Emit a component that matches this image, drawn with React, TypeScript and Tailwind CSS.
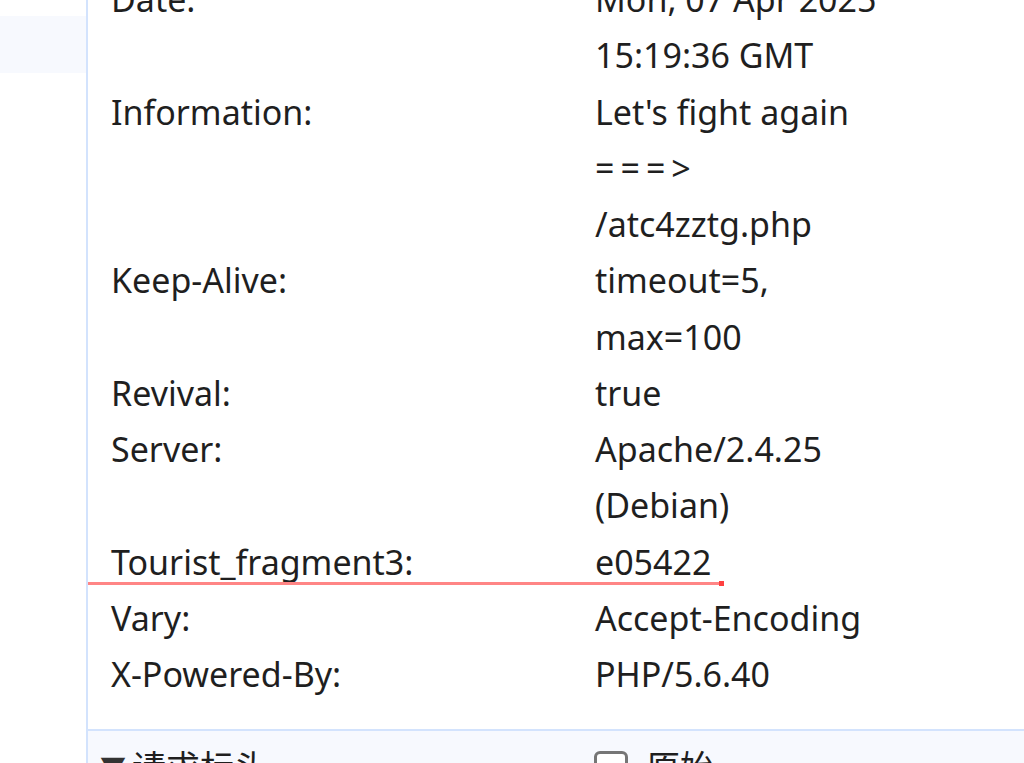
const rows: { key: string; value: string[] }[] = [
  { key: 'Date:', value: ['Mon, 07 Apr 2025', '15:19:36 GMT'] },
  { key: 'Information:', value: ["Let's fight again", '===>', '/atc4zztg.php'] },
  { key: 'Keep-Alive:', value: ['timeout=5,', 'max=100'] },
  { key: 'Revival:', value: ['true'] },
  { key: 'Server:', value: ['Apache/2.4.25', '(Debian)'] },
  { key: 'Tourist_fragment3:', value: ['e05422'] },
  { key: 'Vary:', value: ['Accept-Encoding'] },
  { key: 'X-Powered-By:', value: ['PHP/5.6.40'] },
];

const HeaderRow = ({ k, value, marked }: { k: string; value: string[]; marked?: boolean }) => {
  return (
    <div className="relative grid grid-cols-[484px_1fr]">
      <div>{k}</div>
      <div className="flex flex-col">
        {value.map((line) => (
          <span key={line} className={line === '===>' ? 'whitespace-nowrap tracking-[6px]' : 'whitespace-nowrap'}>
            {line}
          </span>
        ))}
      </div>
      {marked && (
        <div className="absolute bottom-[5px] left-[-23px] flex h-[3px] w-[636px] items-center">
          <div className="h-[3px] flex-1 bg-[#ff8585]" />
          <div className="h-[5px] w-[5px] bg-[#ff4040]" />
        </div>
      )}
    </div>
  );
};

const App = () => {
  return (
    <div className="flex h-[763px] w-[1024px] overflow-hidden bg-white font-['Noto_Sans','Noto_Sans_CJK_SC',sans-serif] text-[34px] leading-[56.27px] text-[#1f1f1f]">
      <div className="w-[88px] shrink-0 border-r-2 border-[#d3e3fd]">
        <div className="mt-4 h-[57px] bg-[#f7f9fe]" />
      </div>

      <div className="flex min-w-0 flex-1 flex-col">
        <div className="mt-[-29px] pb-[27px] pl-[23px]">
          {rows.map((r) => (
            <HeaderRow key={r.key} k={r.key} value={r.value} marked={r.key === 'Tourist_fragment3:'} />
          ))}
        </div>

        <div className="flex-1 border-t-2 border-[#d3e3fd] bg-[#f7f9fe] pl-[12px] pt-[8px]">
          <div className="grid grid-cols-[494px_1fr]">
            <div className="flex items-center gap-[6px]">
              <span className="text-[26px] text-[#333]">▼</span>
              <span>请求标头</span>
            </div>
            <div className="flex items-center gap-[18px]">
              <span className="h-[34px] w-[34px] rounded-[6px] border-[3px] border-[#767676] bg-white" />
              <span>原始</span>
            </div>
          </div>
        </div>
      </div>
    </div>
  );
};

export default App;
